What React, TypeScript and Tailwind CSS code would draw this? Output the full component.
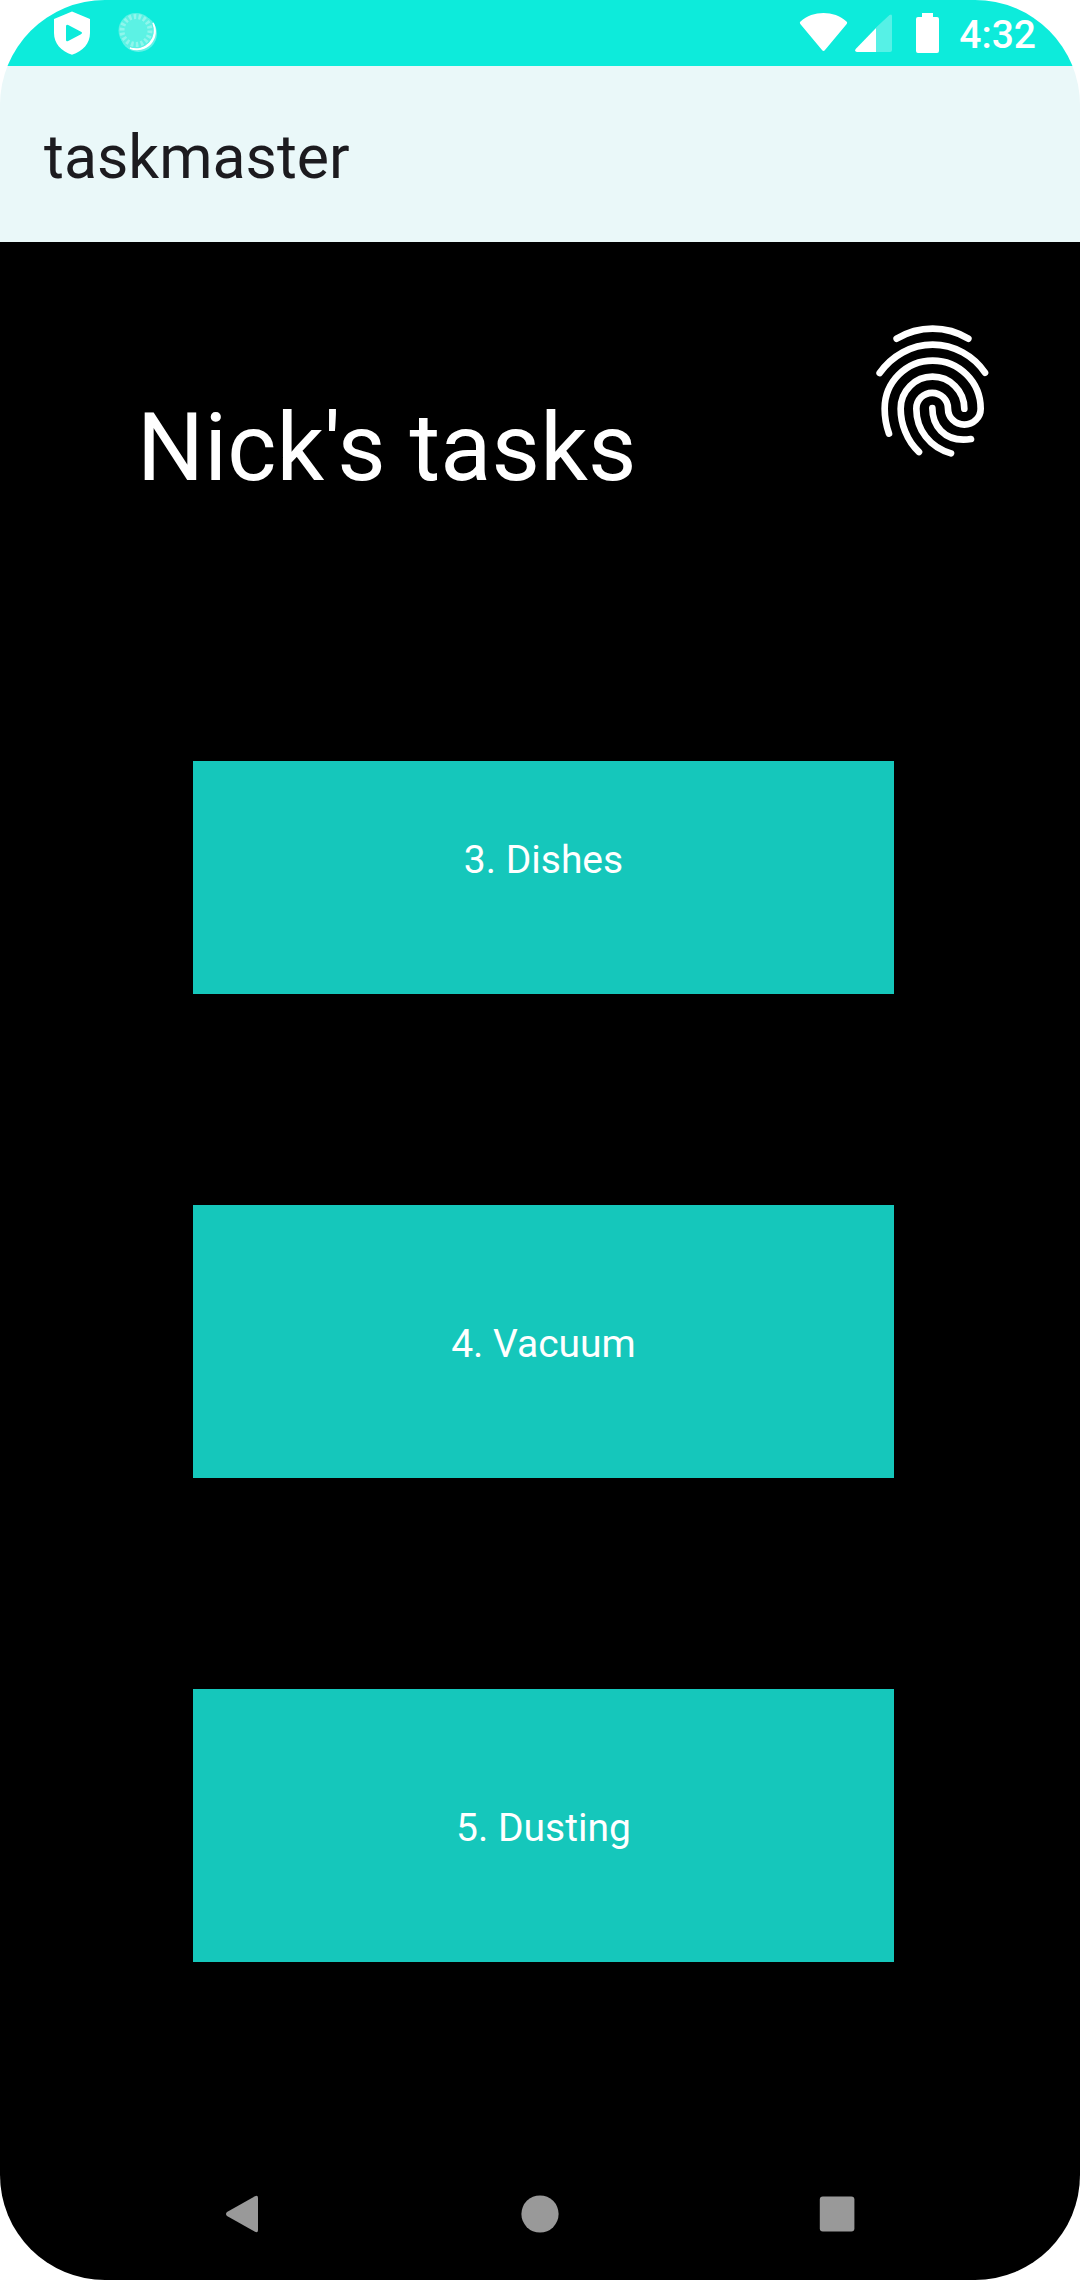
import React from "react";

const tasks = ["3. Dishes", "4. Vacuum", "5. Dusting"];

function ShieldIcon() {
  return (
    <svg className="ml-[54px] h-[44px] w-[36px] shrink-0" viewBox="0 0 36 44">
      <path
        fill="#fff"
        fillRule="evenodd"
        d="M18 0.5 L36 8 V22 C36 32 29 40.500 18 43.700 C7 40.500 0 32 0 22 V8 Z M12 15.300 V28.700 Q12 31 14.200 29.900 L27 23.200 Q29 22 27 20.800 L14.200 14.100 Q12 13 12 15.300 Z"
      />
    </svg>
  );
}

function SyncIcon() {
  return (
    <svg className="ml-[28px] h-[42px] w-[42px] shrink-0" viewBox="0 0 42 42">
      <circle cx="20.500" cy="22.500" r="18.500" fill="#fff" opacity="0.35" />
      <path d="M35 12 A18.500 18.500 0 0 1 12 37 A18 18 0 0 0 35 12 Z" fill="#fff" stroke="#fff" strokeWidth="1.600" />
      <circle cx="18" cy="19.500" r="17.500" fill="#5cf2e4" />
      <circle cx="18" cy="19.500" r="14" fill="none" stroke="#8ff6ec" strokeWidth="5" strokeDasharray="2.600 2.264" />
    </svg>
  );
}

function StatusBar() {
  return (
    <div className="flex h-[66px] shrink-0 items-start bg-[#0debdb] text-white">
      <div className="flex pt-[11px]">
        <ShieldIcon />
        <SyncIcon />
      </div>
      <div className="ml-auto flex pr-[44px] pt-[12px]">
        <svg className="h-[40px] w-[49px]" viewBox="0 0 49 40">
          <path fill="#fff" d="M1.500 9.500 C14 -1.800 35 -1.800 47.500 9.500 Q48.700 10.700 47.700 12 L26 38 Q24.500 39.800 23 38 L1.300 12 Q0.300 10.700 1.500 9.500 Z" />
        </svg>
        <svg className="ml-[7px] h-[41px] w-[38px]" viewBox="0 0 38 41">
          <path fill="#fff" opacity="0.3" d="M21 15.500 L34.500 3 Q37 1.500 37 4 V38 Q37 40 35 40 H21 Z" />
          <path fill="#fff" d="M21 16 V40 H2 Q-0.800 39.600 0.700 37 Z" />
        </svg>
        <svg className="ml-[23px] h-[42px] w-[23px]" viewBox="0 0 23 42">
          <path fill="#fff" d="M6 1 H17 V5 H21 Q23 5 23 7 V39 Q23 41 21 41 H2 Q0 41 0 39 V7 Q0 5 2 5 H6 Z" />
        </svg>
        <span className="ml-[20px] pt-px text-[39px] leading-[45px] font-medium">4:32</span>
      </div>
    </div>
  );
}

function Fingerprint() {
  return (
    <svg
      className="h-[160px] w-[150px] shrink-0"
      viewBox="0 0 450 480"
      fill="none"
      stroke="#fff"
      strokeWidth="20"
      strokeLinecap="round"
      strokeLinejoin="round"
    >
      <path d="M110 86 Q160 56 218 56 Q276 56 325 86" />
      <path d="M59 189 C95 138 153 104 218 104 S341 138 375 188" />
      <path d="M87 371 C78 345 74 320 74 296 A144 144 0 0 1 362 296 A49 48 0 0 1 264 296 A47.500 47.500 0 0 0 169 296 C169 360 210 412 273 430" />
      <path d="M177 426 C140 392 122 340 122 296 A95.500 96 0 0 1 313 296" />
      <path d="M217 294 C217 350 255 389 310 389 Q322 389 333 387" />
    </svg>
  );
}

function NavBar() {
  return (
    <nav className="flex h-[132px] shrink-0 items-center justify-between bg-black px-[221px]">
      <svg className="h-[44px] w-[44px]" viewBox="0 0 44 44">
        <path fill="#999" d="M6 20 L34 4.200 Q37 2.800 37 6 V38 Q37 41.200 34 39.800 L6 24 Q4 22 6 20 Z" />
      </svg>
      <svg className="h-[44px] w-[44px]" viewBox="0 0 44 44">
        <circle cx="22" cy="22" r="18.600" fill="#999" />
      </svg>
      <svg className="h-[44px] w-[44px]" viewBox="0 0 44 44">
        <rect x="4.800" y="4.600" width="34.600" height="34.800" rx="3" fill="#999" />
      </svg>
    </nav>
  );
}

export default function App() {
  return (
    <div className="h-[2280px] w-[1080px] bg-white font-['Roboto',sans-serif]">
      <div className="flex h-full flex-col overflow-hidden rounded-[105px]">
        <StatusBar />
        <header className="flex h-[176px] shrink-0 items-center bg-[#eaf8f9] pt-[6px] pl-[44px]">
          <h1 className="text-[60.8px] leading-[71px] text-[#1c1b1f]">taskmaster</h1>
        </header>
        <main className="flex min-h-0 flex-1 flex-col bg-black text-white">
          <div className="flex h-[519px] shrink-0 items-start justify-between pr-[70px] pl-[137px]">
            <h2 className="pt-[151px] text-[94px] leading-[110px] tracking-[0.15px]">Nick's tasks</h2>
            <div className="pt-[68px]">
              <Fingerprint />
            </div>
          </div>
          <div className="ml-[193px] w-[701px] overflow-hidden">
            <ul className="-mt-[40px] flex flex-col gap-[211px]">
              {tasks.map((task) => (
                <li
                  key={task}
                  className="flex h-[273px] items-center justify-center bg-[#15c7bb] pt-[6px] text-[39px] leading-[51px]"
                >
                  {task}
                </li>
              ))}
            </ul>
          </div>
        </main>
        <NavBar />
      </div>
    </div>
  );
}
